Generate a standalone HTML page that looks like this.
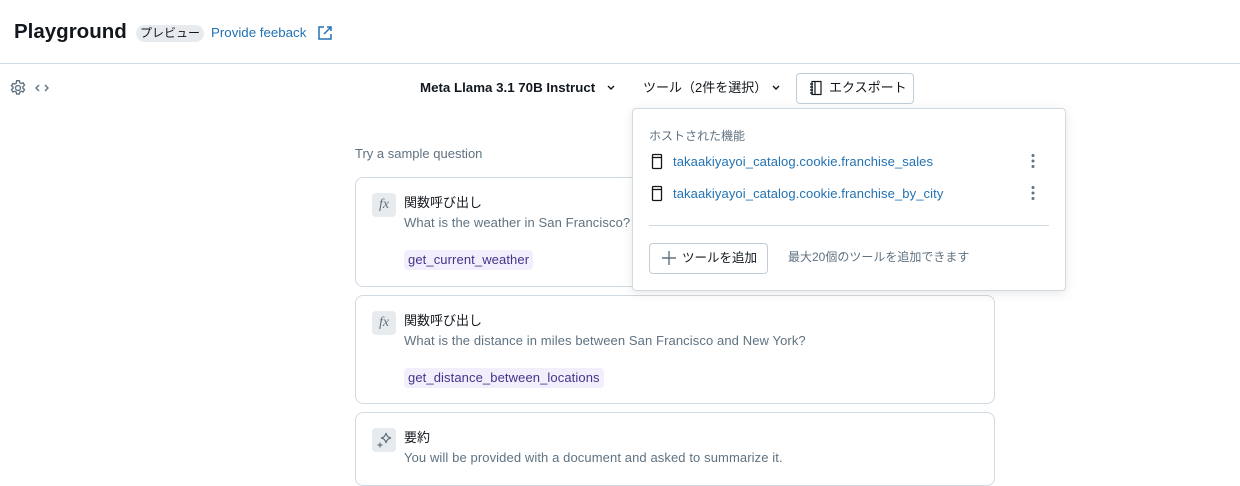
<!DOCTYPE html>
<html><head><meta charset="utf-8"><style>
*{box-sizing:border-box;margin:0;padding:0}
body{width:1240px;height:486px;overflow:hidden;background:#fff;font-family:"Liberation Sans","Noto Sans CJK JP",sans-serif;color:#11171c;position:relative;line-height:16px}
.a{position:absolute;white-space:nowrap}
.card{position:absolute;left:355px;width:640px;border:1px solid #d1d9e1;border-radius:8px;background:#fff}
.ib{position:absolute;left:16px;top:15px;width:24px;height:24px;border-radius:4px;background:#e8ebee;color:#5f7281;font-style:italic;font-family:"Liberation Serif",serif;font-size:14px;text-align:center;line-height:24px}
.ct{position:absolute;left:48px;font-size:13px}
.cd{position:absolute;left:48px;font-size:13px;color:#5f7281;letter-spacing:.1px}
.tag{position:absolute;left:48px;background:#f2eefb;color:#44348c;font-size:13px;border-radius:4px;padding:0 4px;height:20px;line-height:20px;letter-spacing:.1px}
.lnk{color:#2272b4;font-size:13px}
</style></head><body>
<div class="a" style="left:14px;top:20px;font-size:20.5px;font-weight:700;line-height:24px">Playground</div>
<div class="a" style="left:136px;top:25px;width:68px;height:17px;background:#e8ebee;border-radius:9px;font-size:12px;text-align:center;line-height:17px">プレビュー</div>
<div class="a lnk" style="left:211px;top:25px;font-size:13.3px">Provide feeback</div>
<svg class="a" style="left:317px;top:25px" width="16" height="16" viewBox="0 0 16 16" fill="none" stroke="#2272b4" stroke-width="1.5"><path d="M7 2H2v12h12V9"/><path d="M10 2h4v4M14 2L7 9"/></svg>
<div class="a" style="left:0;top:63px;width:1240px;height:1px;background:#d1d9e1"></div>
<svg class="a" style="left:9px;top:79px" width="18" height="18" viewBox="0 0 16 16" fill="none" stroke="#5f7281" stroke-width="1.2"><circle cx="8" cy="8" r="2.2"/><path d="M6.8 1.5h2.4l.4 1.8 1.3.7 1.7-.6 1.2 2.1-1.4 1.2v1.5l1.4 1.2-1.2 2.1-1.7-.6-1.3.7-.4 1.8H6.8l-.4-1.8-1.3-.7-1.7.6-1.2-2.1 1.4-1.2V7.2L2.2 6l1.2-2.1 1.7.6 1.3-.7z"/></svg>
<svg class="a" style="left:34px;top:82px" width="16" height="12" viewBox="0 0 16 12" fill="none" stroke="#5f7281" stroke-width="1.4"><path d="M5 3L2 6l3 3M11 3l3 3-3 3"/></svg>
<div class="a" style="left:420px;top:80px;font-size:13.3px;font-weight:700">Meta Llama 3.1 70B Instruct</div>
<svg class="a" style="left:606px;top:84px" width="10" height="8" viewBox="0 0 10 8" fill="none" stroke="#11171c" stroke-width="1.4"><path d="M2 2l3 3 3-3"/></svg>
<div class="a" style="left:643px;top:80px;font-size:13px">ツール（2件を選択）</div>
<svg class="a" style="left:771px;top:84px" width="10" height="8" viewBox="0 0 10 8" fill="none" stroke="#11171c" stroke-width="1.4"><path d="M2 2l3 3 3-3"/></svg>
<div class="a" style="left:796px;top:73px;width:118px;height:31px;border:1px solid #c0cdd8;border-radius:4px"></div>
<svg class="a" style="left:809px;top:80px" width="14" height="16" viewBox="0 0 14 16" fill="none" stroke="#11171c" stroke-width="1.2"><rect x="3" y="1.5" width="9" height="13"/><path d="M6 1.5v13M1 4h3M1 7h3M1 10h3M1 13h3"/></svg>
<div class="a" style="left:829px;top:80px;font-size:13px">エクスポート</div>
<div class="a" style="left:355px;top:146px;font-size:13px;color:#5f7281">Try a sample question</div>
<div class="card" style="top:177px;height:110px"><div class="ib">fx</div><div class="ct" style="top:17px">関数呼び出し</div><div class="cd" style="top:37px">What is the weather in San Francisco?</div><div class="tag" style="top:72px">get_current_weather</div></div>
<div class="card" style="top:295px;height:109px"><div class="ib">fx</div><div class="ct" style="top:17px">関数呼び出し</div><div class="cd" style="top:37px">What is the distance in miles between San Francisco and New York?</div><div class="tag" style="top:72px">get_distance_between_locations</div></div>
<div class="card" style="top:412px;height:74px"><div class="ib"><svg width="24" height="24" viewBox="0 0 24 24" fill="none" stroke="#5f7281" stroke-width="1.2"><path d="M14 5c.5 3 2 4.5 5 5-3 .5-4.5 2-5 5-.5-3-2-4.5-5-5 3-.5 4.5-2 5-5z"/><path d="M8 14.5v5M5.5 17h5"/></svg></div><div class="ct" style="top:17px">要約</div><div class="cd" style="top:37px">You will be provided with a document and asked to summarize it.</div></div>
<div class="a" style="left:632px;top:108px;width:434px;height:183px;border:1px solid #d1d9e1;border-radius:4px;background:#fff;box-shadow:0 2px 10px rgba(0,0,0,.1)">
<div class="a" style="left:16px;top:19px;font-size:12px;color:#5f7281">ホストされた機能</div>
<svg class="a" style="left:18px;top:44px" width="12" height="17" viewBox="0 0 12 17" fill="none" stroke="#11171c" stroke-width="1.3"><rect x="1.5" y="1.5" width="9" height="14" rx="1"/><path d="M1.5 4.5h9"/></svg>
<div class="a lnk" style="left:40px;top:45px;letter-spacing:.1px">takaakiyayoi_catalog.cookie.franchise_sales</div>
<svg class="a" style="left:398px;top:44px" width="4" height="16"><circle cx="2" cy="2.5" r="1.5" fill="#5f7281"/><circle cx="2" cy="8" r="1.5" fill="#5f7281"/><circle cx="2" cy="13.5" r="1.5" fill="#5f7281"/></svg>
<svg class="a" style="left:18px;top:76px" width="12" height="17" viewBox="0 0 12 17" fill="none" stroke="#11171c" stroke-width="1.3"><rect x="1.5" y="1.5" width="9" height="14" rx="1"/><path d="M1.5 4.5h9"/></svg>
<div class="a lnk" style="left:40px;top:77px;letter-spacing:.1px">takaakiyayoi_catalog.cookie.franchise_by_city</div>
<svg class="a" style="left:398px;top:76px" width="4" height="16"><circle cx="2" cy="2.5" r="1.5" fill="#5f7281"/><circle cx="2" cy="8" r="1.5" fill="#5f7281"/><circle cx="2" cy="13.5" r="1.5" fill="#5f7281"/></svg>
<div class="a" style="left:16px;top:116px;width:400px;height:1px;background:#d1d9e1"></div>
<div class="a" style="left:16px;top:134px;width:119px;height:31px;border:1px solid #c0cdd8;border-radius:4px"></div>
<svg class="a" style="left:29px;top:142px" width="14" height="14" viewBox="0 0 14 14" stroke="#5f7281" stroke-width="1.4"><path d="M7 0v14M0 7h14"/></svg>
<div class="a" style="left:49px;top:141px;font-size:12.5px">ツールを追加</div>
<div class="a" style="left:155px;top:140px;font-size:12px;color:#5f7281">最大20個のツールを追加できます</div>
</div>
</body></html>
